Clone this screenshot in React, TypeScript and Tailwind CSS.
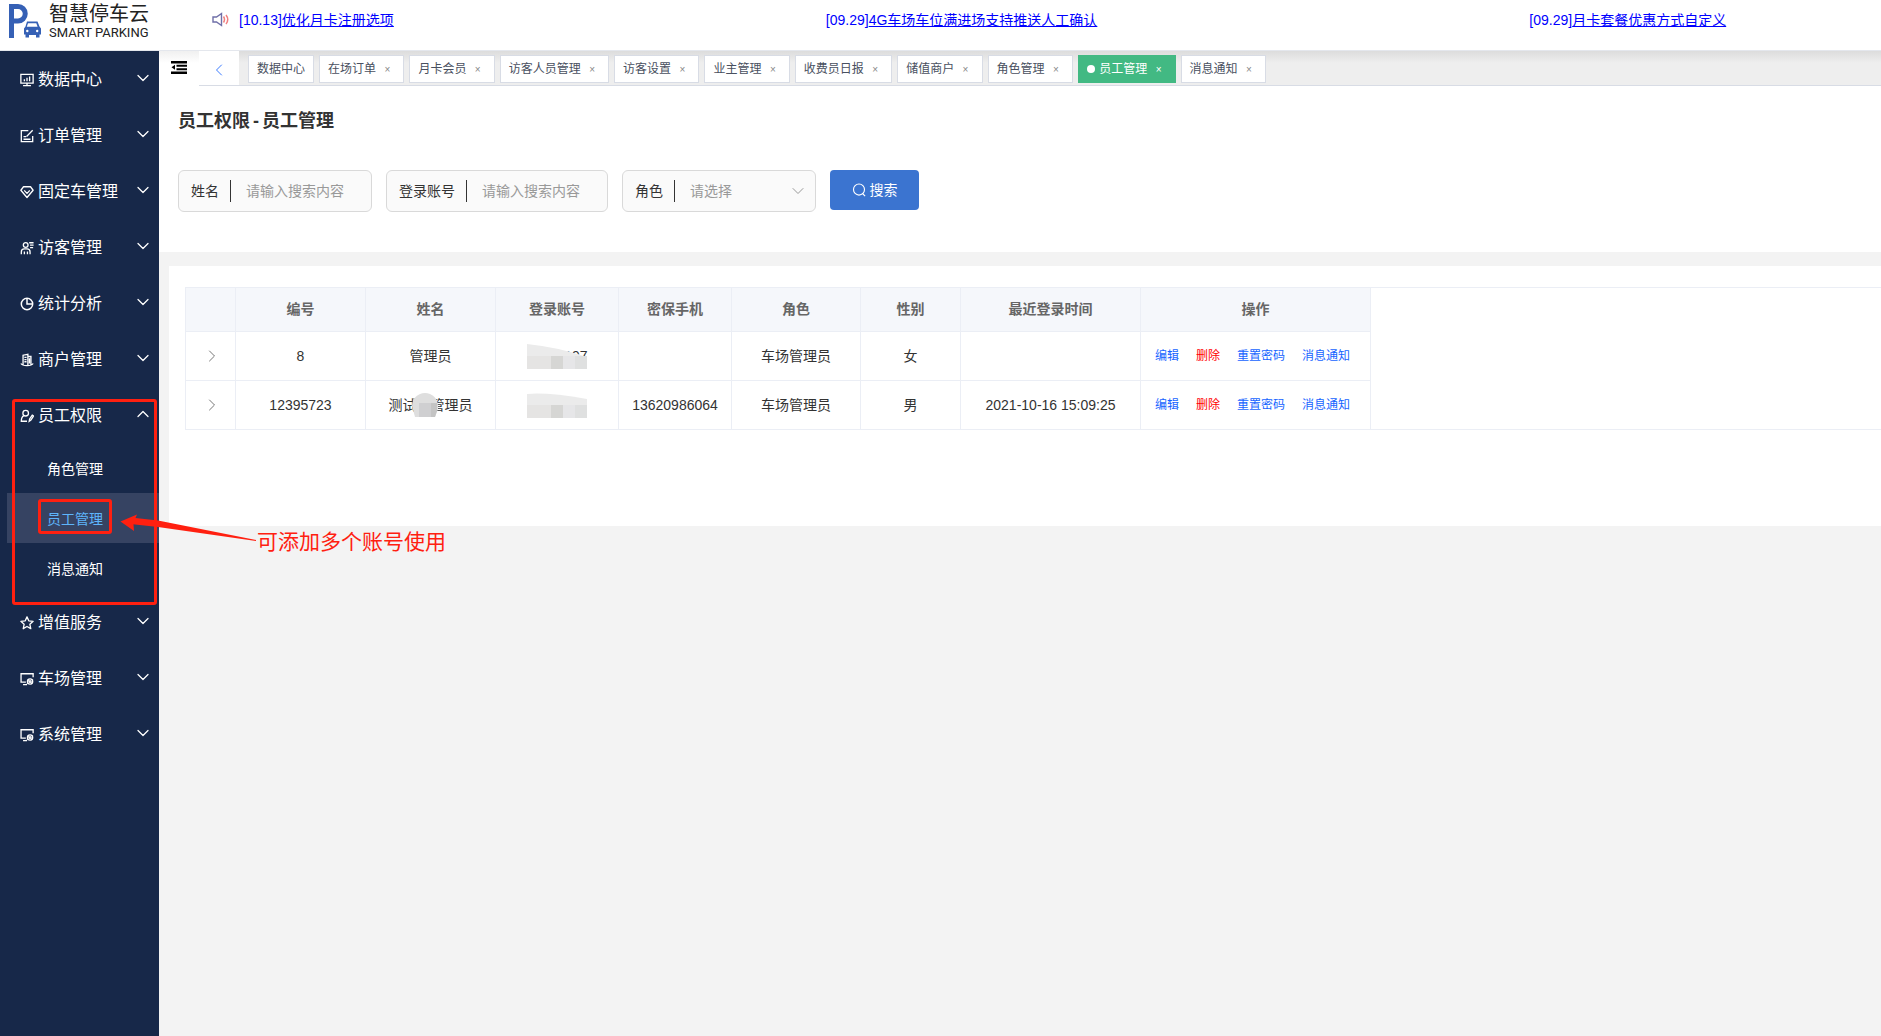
import React from 'react';
import { ChevronDown, ChevronUp, ChevronRight, ChevronLeft } from 'lucide-react';

const stroke = { fill: 'none', stroke: 'currentColor', strokeWidth: 1.5 };

const icons: Record<string, React.ReactNode> = {
  data: (
    <g {...stroke}>
      <path d="M1 1.500h14v10H1zM8 11v3M3.500 14.500h9M5 9.500V7M8 9.500V5.500M11 9.500V4" />
    </g>
  ),
  order: (
    <g {...stroke}>
      <path d="M9.500 1.800H1.500v12.700h13V8M4 11.700h8M4 8.700h3M7.500 8.500l7-7" />
    </g>
  ),
  fixed: (
    <g {...stroke} strokeLinejoin="round">
      <path d="M4 2h8l3 4-7 8.300L1 6zM4.800 6.200L8 9.600l3.200-3.400" />
    </g>
  ),
  visitor: (
    <g {...stroke}>
      <circle cx="6.500" cy="4.500" r="2.700" />
      <path d="M1.500 15v-2.500a3.500 3.500 0 0 1 3.500-3.500h3a3.500 3.500 0 0 1 3.500 3.500V15M5 15v-3M8.500 15v-3M10.500 2h5M11.500 4.800h4M11.500 7.600h3.500" />
    </g>
  ),
  stats: (
    <g {...stroke} strokeWidth="1.700">
      <circle cx="8" cy="8" r="6.500" />
      <path d="M8 1.700V8h6.300" />
    </g>
  ),
  shop: (
    <g {...stroke}>
      <path d="M3.500 13.500V2.500L9 1.500V14M9 4h3.500v9.500M1 12c2 3.300 12 3.300 14 0M5 5h2.500M5 7.500h2.500M5 10h2.500M10.800 6v6" />
    </g>
  ),
  staff: (
    <g {...stroke}>
      <circle cx="6.500" cy="4.800" r="3.200" />
      <path d="M4.500 7.500C2 8.500 1.500 11 1.500 14h6.500M10.500 14l.5-2.700 3-4.300 1.500 1-3 4.500z" />
    </g>
  ),
  star: (
    <g {...stroke} strokeLinejoin="round">
      <path d="M8 1l2 4.500 5 .600-3.700 3.400 1 5L8 12l-4.300 2.500 1-5L1 6.100l5-.600z" />
    </g>
  ),
  screen: (
    <g {...stroke}>
      <path d="M15 6V2H1.200v9.500h5.500M3.500 14.500h4.500" />
      <circle cx="11.500" cy="10.800" r="3" />
      <circle cx="11.500" cy="10.800" r="1" />
      <path d="M8 14l2-5.500M13 14l1.500-5.500" strokeWidth="1" />
    </g>
  ),
};

function MenuIcon({ name }: { name: string }) {
  return (
    <svg viewBox="0 0 16 16" className="size-[14px] shrink-0" aria-hidden="true">
      {icons[name]}
    </svg>
  );
}

const menu = [
  { icon: 'data', label: '数据中心' },
  { icon: 'order', label: '订单管理' },
  { icon: 'fixed', label: '固定车管理' },
  { icon: 'visitor', label: '访客管理' },
  { icon: 'stats', label: '统计分析' },
  { icon: 'shop', label: '商户管理' },
  { icon: 'staff', label: '员工权限', children: ['角色管理', '员工管理', '消息通知'] },
  { icon: 'star', label: '增值服务' },
  { icon: 'screen', label: '车场管理' },
  { icon: 'screen', label: '系统管理' },
];

const tabs = [
  '数据中心', '在场订单', '月卡会员', '访客人员管理', '访客设置', '业主管理',
  '收费员日报', '储值商户', '角色管理', '员工管理', '消息通知',
];

const news = [
  ['[10.13]', '优化月卡注册选项'],
  ['[09.29]', '4G车场车位满进场支持推送人工确认'],
  ['[09.29]', '月卡套餐优惠方式自定义'],
];

function Header() {
  return (
    <header className="flex h-[51px] shrink-0 border-b border-[#e4e7ed] bg-white">
      <div className="flex w-[159px] shrink-0 items-start pl-[7px] pt-[3px]">
        <svg viewBox="0 0 34 36" className="h-9 w-[34px] shrink-0" aria-hidden="true">
          <path d="M4.500 35V3.500H11a6.800 6.800 0 0 1 0 14.500H4.500" fill="none" stroke="#3560b5" strokeWidth="5" />
          <path d="M20 18.500h10.500l2 5 1.500 2v6h-1.500V34.500h-3.500V32h-7v2.500h-3.500v-3H17v-6l1.500-2z" fill="#3560b5" />
          <path d="M21 20.300h8.300l1.300 3.500H19.800z" fill="#fff" />
          <circle cx="20.300" cy="28" r="1.200" fill="#fff" />
          <circle cx="30.200" cy="28" r="1.200" fill="#fff" />
        </svg>
        <div className="ml-2 whitespace-nowrap text-[#222]">
          <div className="text-[20px] leading-[23px]">智慧停车云</div>
          <div className="font-[Roboto] text-[13px] leading-[14px]">SMART PARKING</div>
        </div>
      </div>
      <div className="flex min-w-0 flex-1 items-start overflow-hidden pl-[53px] pt-[9px]">
        <svg viewBox="0 0 18 16" className="mr-[9px] mt-[3px] h-4 w-[18px] shrink-0" fill="none" aria-hidden="true">
          <path d="M1 5h3.500L9.500 1.500v12L4.500 10H1z" stroke="#6f6fa8" strokeWidth="1.400" />
          <path d="M11.500 4.500q2 3 0 6M14 3q3.500 4.500 0 9" stroke="#f08080" strokeWidth="1.500" />
        </svg>
        <div className="flex gap-[432px] whitespace-nowrap text-[14px] leading-[22px] text-[#0000ff]">
          {news.map(([date, text]) => (
            <a key={text} href="#news">
              {date}
              <span className="underline">{text}</span>
            </a>
          ))}
        </div>
      </div>
    </header>
  );
}

function Sidebar() {
  return (
    <nav className="relative w-[159px] shrink-0 bg-[#172849] text-white">
      {menu.map((m) => (
        <div key={m.label}>
          <button className="flex h-14 w-full items-center pl-5 pr-[6px] pt-0.5 text-left">
            <MenuIcon name={m.icon} />
            <span className="ml-1 flex-1 whitespace-nowrap text-[16px]">{m.label}</span>
            {m.children ? (
              <ChevronUp size={20} strokeWidth={1.500} className="mb-1" />
            ) : (
              <ChevronDown size={20} strokeWidth={1.500} className="mb-1" />
            )}
          </button>
          {m.children && (
            <ul className="pb-px pl-[7px]">
              {m.children.map((c) => (
                <li key={c}>
                  <a
                    href="#staff"
                    className={
                      c === '员工管理'
                        ? 'flex h-[50px] items-center bg-[#364362] pl-10 pt-0.5 text-[14px] text-[#5eb5fb]'
                        : 'flex h-[50px] items-center pl-10 pt-0.5 text-[14px]'
                    }
                  >
                    {c}
                  </a>
                </li>
              ))}
            </ul>
          )}
        </div>
      ))}
      <div className="absolute left-3 top-[348px] h-[206px] w-[145px] rounded-[3px] border-3 border-[#ff2010]" />
      <div className="absolute left-[38px] top-[448px] h-[35px] w-[74px] rounded-[3px] border-3 border-[#ff2010]" />
      <div className="absolute left-[120px] top-[462px] z-10 flex w-[340px] items-start text-[#ff2010]">
        <svg viewBox="0 0 137 30" className="h-[30px] w-[137px] shrink-0" fill="currentColor" aria-hidden="true">
          <path d="M0.500 8.500L17 1.500l-1.500 3.500L38 7.500 136 27v1L38 14l-23-2.500-1.500-0.200L14 18z" />
        </svg>
        <span className="mt-[15px] whitespace-nowrap text-[21px] leading-[28px]">可添加多个账号使用</span>
      </div>
    </nav>
  );
}

function TabBar() {
  return (
    <div className="flex h-[35px] items-stretch border-b border-[#d8dce5] bg-[linear-gradient(#dcdcdc,#eeeeee_12px)]">
      <button aria-label="收起菜单" className="-mb-px flex w-10 shrink-0 items-start justify-center bg-[linear-gradient(#f0f0f0,#fff_12px)] pt-[10px]">
        <svg viewBox="0 0 16 13" className="h-[13px] w-4" aria-hidden="true">
          <path d="M0 0h16v2.500H0zM5.500 3.800h10.500v2H5.500zM5.500 7.200h10.500v2H5.500zM0 10.500h16V13H0zM4 3.800v5L0.500 6.300z" />
        </svg>
      </button>
      <button aria-label="向左" className="flex w-10 shrink-0 items-center justify-center bg-white pt-1">
        <ChevronLeft size={20} strokeWidth={1.200} className="text-[#3b7bff]" />
      </button>
      <div className="flex gap-[5px] overflow-hidden pl-[9px] pt-1">
        {tabs.map((t, i) => {
          const active = t === '员工管理';
          return (
            <div
              key={t}
              className={
                active
                  ? 'h-7 whitespace-nowrap border border-[#42b983] bg-[#42b983] px-2 text-[12px] leading-[26px] text-white'
                  : 'h-7 whitespace-nowrap border border-[#d8dce5] bg-white px-2 text-[12px] leading-[26px] text-[#495060]'
              }
            >
              {active && <span className="mr-px inline-block size-2 rounded-full bg-white" />}
              {active && ' '}
              <a href="#tab">{t}</a>
              {i > 0 && ' '}
              {i > 0 && (
                <button
                  aria-label={'关闭' + t}
                  className={active ? 'inline-block w-4 text-center text-[10px]' : 'inline-block w-4 text-center text-[10px] text-[#888]'}
                >
                  ×
                </button>
              )}
            </div>
          );
        })}
      </div>
    </div>
  );
}

const fieldBox = 'flex h-[42px] items-center rounded-md border border-[#d9d9d9] bg-[#fafafa] pl-3 text-[14px]';
const fieldLabel = 'shrink-0 border-r border-[#333] pr-[11px] leading-[22px] text-[#333]';

function SearchPanel() {
  return (
    <section className="h-[166px] bg-white pl-[19px] pt-[22px]">
      <h1 className="text-[18px] font-bold leading-[26px] text-[#333]">
        员工权限<span className="px-[3px]">-</span>员工管理
      </h1>
      <form className="mt-9 flex items-start gap-[14px]">
        <div className={fieldBox}>
          <label htmlFor="name" className={fieldLabel}>姓名</label>
          <input id="name" placeholder="请输入搜索内容" className="w-[140px] bg-transparent pl-[15px] outline-none placeholder:text-[#999]" />
        </div>
        <div className={fieldBox}>
          <label htmlFor="account" className={fieldLabel}>登录账号</label>
          <input id="account" placeholder="请输入搜索内容" className="w-[140px] bg-transparent pl-[15px] outline-none placeholder:text-[#999]" />
        </div>
        <div className={fieldBox}>
          <label htmlFor="role" className={fieldLabel}>角色</label>
          <div className="relative">
            <select id="role" className="w-[140px] appearance-none bg-transparent pl-[15px] text-[#999] outline-none">
              <option>请选择</option>
            </select>
            <ChevronDown size={20} strokeWidth={1.200} className="pointer-events-none absolute right-[7px] top-0 text-[#999]" />
          </div>
        </div>
        <button type="button" className="flex h-10 w-[89px] items-center justify-center gap-1 rounded bg-[#3b74d0] text-[14px] text-white">
          <svg viewBox="0 0 16 16" className="size-[14px]" fill="none" stroke="currentColor" strokeWidth="1.300" aria-hidden="true">
            <circle cx="8" cy="7.500" r="6.300" />
            <path d="M12 12l3 3" />
          </svg>
          搜索
        </button>
      </form>
    </section>
  );
}

const columns: [string, string][] = [
  ['', 'w-[50px]'], ['编号', 'w-[130px]'], ['姓名', 'w-[130px]'], ['登录账号', 'w-[123px]'], ['密保手机', 'w-[113px]'],
  ['角色', 'w-[129px]'], ['性别', 'w-[100px]'], ['最近登录时间', 'w-[180px]'], ['操作', 'w-[230px]'],
];

function AccountMask({ partial }: { partial?: boolean }) {
  return (
    <span className="relative inline-block h-6 w-[61px] align-middle">
      {partial && <span className="absolute right-0 top-0 leading-6">197</span>}
      <svg viewBox="0 0 66 28" className="absolute left-0 top-0 h-7 w-[66px]" aria-hidden="true">
        <path d="M0 0Q30 3 60 13L66 28H0z" fill="#fff" />
        <path d={partial ? 'M0 0Q30 3 60 13V13H0z' : 'M0 1Q20 -1 60 6V13H0z'} fill="#ebebeb" />
        <path d="M0 12h24v13H0z" fill="#e5e4e3" />
        <path d="M24 12h12v13H24z" fill="#d6d6d4" />
        <path d="M36 12h12v13H36z" fill="#e6e6e8" />
        <path d="M48 12h12v13H48z" fill="#dfe0e0" />
      </svg>
    </span>
  );
}

const cell = 'border-b border-r border-[#ebeef5]';

function Row({ id, name, account, phone, sex, time }: { id: string; name: React.ReactNode; account: React.ReactNode; phone: string; sex: string; time: string }) {
  return (
    <tr className="h-[49px] last:h-12">
      <td className={cell}>
        <button aria-label="展开" className="flex w-full justify-center pl-0.5">
          <ChevronRight size={20} strokeWidth={1.200} className="text-[#777]" />
        </button>
      </td>
      <td className={cell}>{id}</td>
      <td className={cell}>{name}</td>
      <td className={cell}>{account}</td>
      <td className={cell}>{phone}</td>
      <td className={cell}>车场管理员</td>
      <td className={cell}>{sex}</td>
      <td className={cell}>{time}</td>
      <td className={cell}>
        <div className="flex gap-[17px] pl-[14px] text-[12px] text-[#1664ff]">
          <a href="#edit">编辑</a>
          <a href="#delete" className="text-[#ff0000]">删除</a>
          <a href="#reset">重置密码</a>
          <a href="#notify">消息通知</a>
        </div>
      </td>
    </tr>
  );
}

export default function App() {
  return (
    <div className="flex min-h-screen flex-col bg-[#f3f3f3] font-['Liberation_Sans','Noto_Sans_CJK_SC',sans-serif]">
      <Header />
      <div className="flex flex-1">
        <Sidebar />
        <main className="min-w-0 flex-1">
          <TabBar />
          <SearchPanel />
          <section className="ml-[10px] mt-[14px] overflow-hidden bg-white pb-24 pl-4 pt-[21px]">
            <div className="border-y border-l border-[#ebeef5]">
              <table className="w-[1185px] table-fixed border-separate border-spacing-0 text-center text-[14px] text-[#333] [&_tbody_tr:last-child_td]:border-b-0">
                <thead>
                  <tr className="h-11 bg-[#f5f7fb] text-[#666]">
                    {columns.map(([label, width]) => (
                      <th key={label} className={`${cell} ${width} font-bold`}>{label}</th>
                    ))}
                  </tr>
                </thead>
                <tbody>
                  <Row id="8" name="管理员" account={<AccountMask partial />} phone="" sex="女" time="" />
                  <Row
                    id="12395723"
                    name={
                      <span className="relative inline-block">
                        测试总管理员
                        <svg viewBox="0 0 26 24" className="absolute left-[23px] top-[-2px] h-6 w-[26px]" aria-hidden="true">
                          <path d="M0 13a13 13 0 0 1 26 0v3l-3 8H3z" fill="#dedede" />
                          <path d="M7 10h12v14H7z" fill="#cfcfd1" />
                          <path d="M19 10h6v8l-2 6h-4z" fill="#c4c4c4" />
                        </svg>
                      </span>
                    }
                    account={<AccountMask />}
                    phone="13620986064"
                    sex="男"
                    time="2021-10-16 15:09:25"
                  />
                </tbody>
              </table>
            </div>
          </section>
        </main>
      </div>
    </div>
  );
}
